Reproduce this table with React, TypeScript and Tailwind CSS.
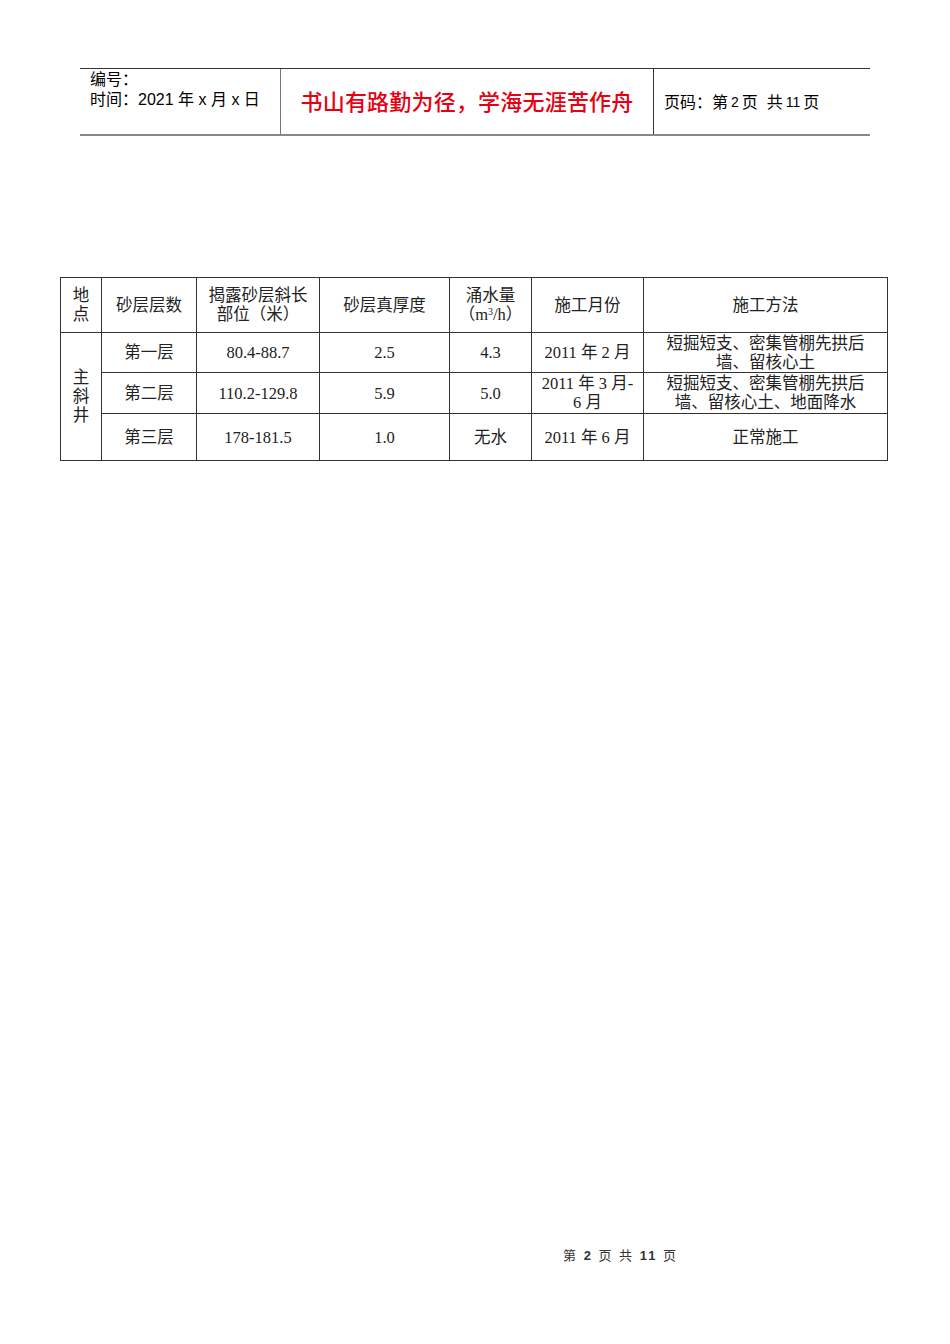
const rows = [
  { layer: "第一层", pos: "80.4-88.7", thick: "2.5", water: "4.3", month: ["2011 年 2 月"], method: ["短掘短支、密集管棚先拱后", "墙、留核心土"], h: "h-[40px]" },
  { layer: "第二层", pos: "110.2-129.8", thick: "5.9", water: "5.0", month: ["2011 年 3 月-", "6 月"], method: ["短掘短支、密集管棚先拱后", "墙、留核心土、地面降水"], h: "h-[41px]" },
  { layer: "第三层", pos: "178-181.5", thick: "1.0", water: "无水", month: ["2011 年 6 月"], method: ["正常施工"], h: "h-[47px]" },
];

const cell = "border border-[#333] text-center align-middle p-0 leading-[19px]";

export default function App() {
  return (
    <div className="w-[950px] h-[1344px] bg-white relative text-black">
      {/* Page header */}
      <div className="pt-[68px] pl-[80px]">
        <div className="flex w-[790px] h-[68px] border-t border-[#333] border-b-2 border-b-[#888] font-['Liberation_Sans','Noto_Sans_CJK_SC',sans-serif] text-[16px]">
          <div className="w-[201px] pl-[10px] pt-[1px] leading-[20px] border-r border-[#777]">
            <div>编号：</div>
            <div>时间：2021 年 x 月 x 日</div>
          </div>
          <div className="w-[373px] flex items-center justify-center border-r border-[#333] pt-[2px]">
            <span className="text-[#e60012] text-[22px] font-medium tracking-[0.2px]">书山有路勤为径，学海无涯苦作舟</span>
          </div>
          <div className="flex-1 flex items-center pl-[10px] pt-[2px]">
            页码：第 <span className="text-[14px] mx-[3px]">2</span>页&nbsp;&nbsp;共 <span className="text-[14px] mx-[3px]">11</span>页
          </div>
        </div>
      </div>

      {/* Data table */}
      <div className="pt-[141px] pl-[60px]">
        <table className="border-collapse table-fixed w-[827px] text-[16.5px] font-['Liberation_Serif','Noto_Sans_CJK_SC',serif] text-[#222]">
          <colgroup>
            <col className="w-[41px]" />
            <col className="w-[95px]" />
            <col className="w-[123px]" />
            <col className="w-[130px]" />
            <col className="w-[82px]" />
            <col className="w-[112px]" />
            <col className="w-[244px]" />
          </colgroup>
          <tbody>
            <tr className="h-[55px]">
              <td className={cell}>地<br />点</td>
              <td className={cell}>砂层层数</td>
              <td className={cell}>揭露砂层斜长<br />部位（米）</td>
              <td className={cell}>砂层真厚度</td>
              <td className={cell}>涌水量<br />（m<sup className="text-[10px]">3</sup>/h）</td>
              <td className={cell}>施工月份</td>
              <td className={cell}>施工方法</td>
            </tr>
            {rows.map((r, i) => (
              <tr key={i} className={r.h}>
                {i === 0 && (
                  <td rowSpan={3} className={cell}>主<br />斜<br />井</td>
                )}
                <td className={cell}>{r.layer}</td>
                <td className={cell}>{r.pos}</td>
                <td className={cell}>{r.thick}</td>
                <td className={cell}>{r.water}</td>
                <td className={cell}>
                  {r.month.map((m, j) => <div key={j}>{m}</div>)}
                </td>
                <td className={cell}>
                  {r.method.map((m, j) => <div key={j}>{m}</div>)}
                </td>
              </tr>
            ))}
          </tbody>
        </table>
      </div>

      {/* Footer */}
      <div className="absolute top-[1247px] left-[563px] text-[13px] leading-[18px] font-['Liberation_Sans','Noto_Sans_CJK_SC',sans-serif] text-[#333] tracking-[2px]">
        第 <span className="font-bold">2</span> 页 共 <span className="font-bold">11</span> 页
      </div>
    </div>
  );
}
